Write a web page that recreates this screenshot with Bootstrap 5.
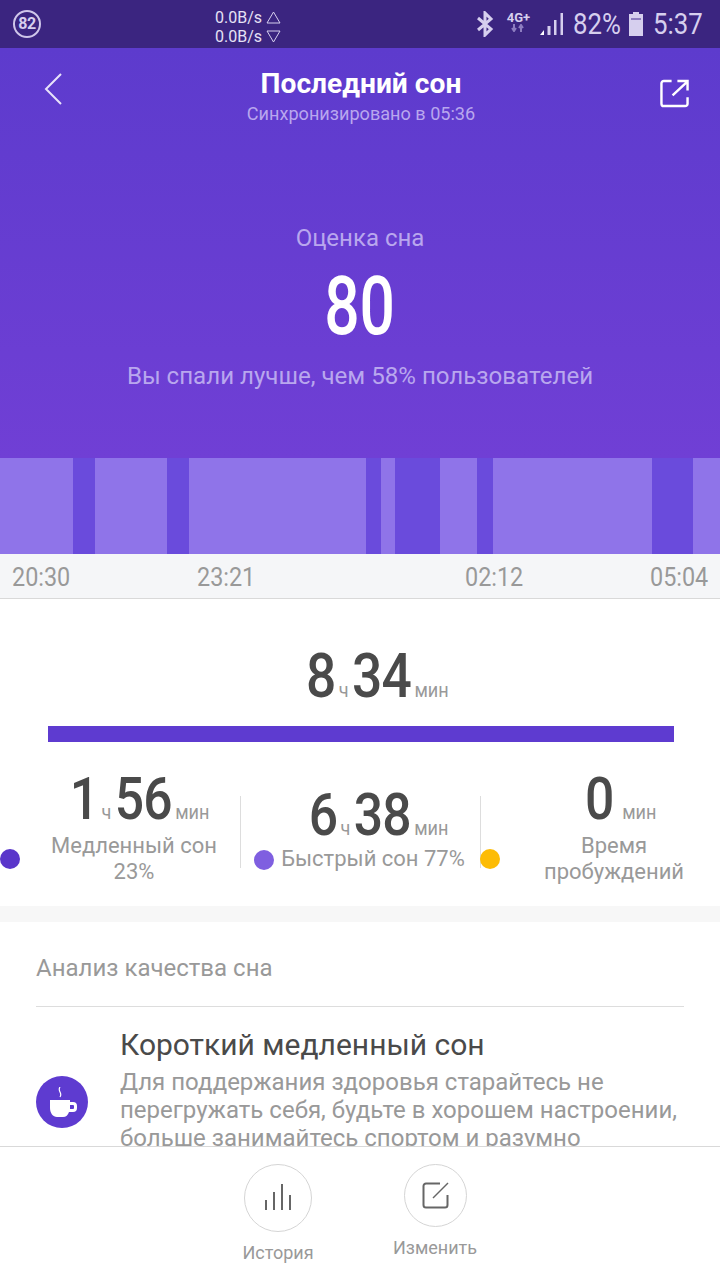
<!DOCTYPE html>
<html lang="ru">
<head>
<meta charset="utf-8">
<title>Последний сон</title>
<link href="https://cdn.jsdelivr.net/npm/bootstrap@5.3.0/dist/css/bootstrap.min.css" rel="stylesheet">
<style>
html,body{margin:0;height:1280px;overflow:hidden;background:#fff}
body{font-family:Roboto,"Noto Sans",sans-serif;color:#4a4a4a}
.screen{width:720px;height:1280px}
.sbar{height:48px;background:#3b2580;color:#d6cfee;padding:0 16px 0 13px}
.ringnum{width:28px;height:28px;border:2px solid #cfc6ea;border-radius:50%;font-size:16px;font-weight:700;line-height:24px;text-align:center;letter-spacing:-.5px}
.netspeed{font-size:16px;line-height:19px;color:#e6e1f5;width:110px;margin-left:174px;padding-top:8px;height:48px}
.netspeed svg{vertical-align:-1px}
.cond{display:inline-block;transform:scaleX(.86)}
.pct{font-size:30px;line-height:48px;transform-origin:center}
.lte{font-size:13px;font-weight:700;line-height:12px;text-align:center;width:28px}
.hero{height:410px;background:linear-gradient(180deg,#5d3bcd 0%,#703fd5 100%);color:#fff}
.topbar{height:85px;padding:0 30px 0 44px}
.htitle{font-size:28.2px;font-weight:700;line-height:30px;padding-top:21px;height:51px}
.hsub{font-size:18.1px;line-height:20px;color:#b9a7ee;margin-top:5px}
.hlabel{font-size:24px;line-height:26px;color:#b9a7ee;margin-top:92px}
.hscore{font-size:82px;line-height:76px;font-weight:500;margin-top:17px}
.hscore .cond{transform:scaleX(.76)}
.hnote{font-size:24.1px;line-height:28px;color:#b9a7ee;margin-top:18px}
.chart{height:96px;background:#8f74e9}
.chart i{display:block;flex:none;height:96px}
.deep{background:#6a4bdc}
.light{background:#8f74e9}
.axis{height:45px;background:#f5f6f8;border-bottom:1px solid #d9d9d9;color:#999;font-size:26px;line-height:46px;padding:0 12px;position:relative}
.axis .cond{transform:scaleX(.9);transform-origin:left center;width:64px;position:absolute;top:0}
.total{height:127px;padding-top:45px;padding-left:38px;line-height:64px}
.bignum{font-size:60px;font-weight:500;color:#4a4a4a;letter-spacing:-1px}
.total .bignum{font-size:62px}
.unit{font-size:21px;color:#999;margin:0 4px}
.bar{height:16px;background:#5e3bd0;margin:0 46px 0 48px}
.stats{height:164px;padding-top:24px}
.stat{position:relative;width:240px;height:128px}
.stat .num{position:absolute;top:0;left:0;right:0;text-align:center;line-height:64px;white-space:nowrap}
.stat-lbl{font-size:22px;line-height:26px;color:#999;text-align:center;position:absolute}
.dot{width:20px;height:20px;border-radius:50%;position:absolute}
.vline{width:1px;height:72px;background:#ddd;position:absolute;top:30px}
.gap{height:16px;background:#f7f7f7}
.analysis{padding:0 36px;overflow:hidden;height:224px}
.atitle{font-size:24px;line-height:26px;color:#999;padding:33px 0 25px;border-bottom:1px solid #ddd}
.aicon{width:52px;height:52px;border-radius:50%;background:#5e3bd0;flex:none;margin-top:69px;padding-left:3px}
.ahead{font-size:30px;line-height:34px;color:#4a4a4a;margin-top:21px}
.atext{font-size:24px;line-height:28px;color:#999;margin-top:6px}
.abody{margin-left:32px;width:580px}
.bottom{height:134px;border-top:1px solid #d9d9d9;background:#fff}
.circ{border:1px solid #d5d5d5;border-radius:50%;background:#fff}
.blabel{font-size:18px;line-height:22px;color:#999;text-align:center}
</style>
</head>
<body>
<div class="screen d-flex flex-column">
  <div class="sbar d-flex align-items-center flex-shrink-0">
    <div class="ringnum flex-shrink-0">82</div>
    <div class="netspeed flex-shrink-0">
      <div>0.0B/s <svg width="15" height="13" viewBox="0 0 15 13"><path d="M7.5 1 14 12H1Z" fill="none" stroke="#d6cfee"/></svg></div>
      <div>0.0B/s <svg width="15" height="13" viewBox="0 0 15 13"><path d="M7.5 12 14 1H1Z" fill="none" stroke="#d6cfee"/></svg></div>
    </div>
    <div class="d-flex align-items-center ms-auto">
      <svg width="18" height="26" viewBox="0 0 18 26"><path d="M2 7 15 18 9 24V2l6 6L2 19" fill="none" stroke="#d6cfee" stroke-width="3"/></svg>
      <div class="lte" style="margin-left:10px;margin-top:-4px">4G+<svg class="d-block mx-auto" width="14" height="8" viewBox="0 0 14 8"><path d="M3 0v5M1 4l2 3 2-3M10 8V3M8 4l2-3 2 3" fill="none" stroke="#8d7dc0" stroke-width="2"/></svg></div>
      <svg style="margin-left:8px" width="24" height="24" viewBox="0 0 24 24"><path d="M0 23 4 18v5Z" fill="#fff"/><rect x="7.500" y="14" width="3" height="9" fill="#d6cfee"/><rect x="14" y="8" width="2.500" height="15" fill="#d6cfee"/><rect x="20.500" y="1" width="2.500" height="22" fill="#d6cfee"/></svg>
      <span class="cond pct" style="margin:0 3px 0 5px">82%</span>
      <svg width="16" height="26" viewBox="0 0 16 26"><path d="M5 1h6v2h4v22H1V3h4Z" fill="#d6cfee"/><rect x="3" y="7" width="10" height="2" fill="#8d7dc0"/></svg>
      <span class="cond pct" style="margin:0 -3px 0 5px">5:37</span>
    </div>
  </div>
  <div class="hero text-center flex-shrink-0">
    <div class="topbar d-flex justify-content-between">
      <svg class="mt-4 flex-shrink-0" width="18" height="34" viewBox="0 0 18 34"><path d="M17 2 2 17l15 15" fill="none" stroke="#e8e2fa" stroke-width="2"/></svg>
      <div>
        <div class="htitle">Последний сон</div>
        <div class="hsub">Синхронизировано в 05:36</div>
      </div>
      <svg class="flex-shrink-0" style="margin-top:31px;margin-right:1px" width="29" height="29" viewBox="0 0 30 30"><path d="M12 2H4a2.500 2.500 0 0 0-2.500 2.500v21A2.500 2.500 0 0 0 4 28h22a2.500 2.500 0 0 0 2.500-2.500V19" fill="none" stroke="#fff" stroke-width="2.500"/><path d="M13 17 28 3M18 2h10.500v10" fill="none" stroke="#fff" stroke-width="2.500"/></svg>
    </div>
    <div class="hlabel">Оценка сна</div>
    <div class="hscore"><span class="cond">80</span></div>
    <div class="hnote">Вы спали лучше, чем 58% пользователей</div>
  </div>
  <div class="chart d-flex flex-shrink-0">
    <i class="light" style="width:73px"></i><i class="deep" style="width:22px"></i><i class="light" style="width:72px"></i><i class="deep" style="width:22px"></i><i class="light" style="width:177px"></i><i class="deep" style="width:15px"></i><i class="light" style="width:14px"></i><i class="deep" style="width:45px"></i><i class="light" style="width:37px"></i><i class="deep" style="width:16px"></i><i class="light" style="width:159px"></i><i class="deep" style="width:41px"></i><i class="light" style="width:27px"></i>
  </div>
  <div class="axis flex-shrink-0">
    <span class="cond" style="left:12px">20:30</span><span class="cond" style="left:197px">23:21</span><span class="cond" style="left:465px">02:12</span><span class="cond" style="left:650px">05:04</span>
  </div>
  <div class="total text-center flex-shrink-0"><span class="cond"><span class="bignum">8</span><span class="unit">ч</span><span class="bignum">34</span><span class="unit">мин</span></span></div>
  <div class="bar flex-shrink-0"></div>
  <div class="stats d-flex flex-shrink-0">
    <div class="stat">
      <div class="num" style="top:1px;padding-left:42px"><span class="cond"><span class="bignum">1</span><span class="unit">ч</span><span class="bignum">56</span><span class="unit">мин</span></span></div>
      <div class="stat-lbl" style="left:46px;width:176px;top:67px">Медленный сон<br>23%</div>
      <div class="dot" style="left:0;background:#5a36ca;top:83px"></div>
      <div class="vline" style="left:240px"></div>
    </div>
    <div class="stat">
      <div class="num" style="top:17px;padding-left:40px"><span class="cond"><span class="bignum">6</span><span class="unit">ч</span><span class="bignum">38</span><span class="unit">мин</span></span></div>
      <div class="stat-lbl" style="left:40px;width:186px;top:80px;white-space:nowrap">Быстрый сон 77%</div>
      <div class="dot" style="left:14px;background:#7f5fe0;top:84px"></div>
      <div class="vline" style="left:240px"></div>
    </div>
    <div class="stat">
      <div class="num" style="top:1px;padding-left:45px"><span class="cond"><span class="bignum">0</span><span class="unit" style="margin-left:10px">мин</span></span></div>
      <div class="stat-lbl" style="left:44px;width:180px;top:67px">Время<br>пробуждений</div>
      <div class="dot" style="left:0;background:#fdbc05;top:83px"></div>
    </div>
  </div>
  <div class="gap flex-shrink-0"></div>
  <div class="analysis flex-shrink-0">
    <div class="atitle">Анализ качества сна</div>
    <div class="d-flex">
      <div class="aicon d-flex align-items-center justify-content-center">
        <svg width="28" height="31" viewBox="0 0 28 31"><path d="M10 0c-3 4 3 6 0 10" fill="none" stroke="#fff" stroke-width="1.200"/><path d="M0 13h20v2h3a4 4 0 0 1 4 4v2a4 4 0 0 1-4 4h-4c-1 3-3 5-6 5H7c-4 0-7-4-7-9Zm20 5v4h3a1 1 0 0 0 1-1v-2a1 1 0 0 0-1-1Z" fill="#fff" fill-rule="evenodd"/></svg>
      </div>
      <div class="abody">
        <div class="ahead">Короткий медленный сон</div>
        <div class="atext">Для поддержания здоровья старайтесь не перегружать себя, будьте в хорошем настроении, больше занимайтесь спортом и разумно</div>
      </div>
    </div>
  </div>
  <div class="bottom d-flex flex-shrink-0">
    <div class="d-flex flex-column align-items-center" style="margin-left:243px;padding-top:17px;width:70px">
      <div class="circ d-flex align-items-center justify-content-center" style="width:68px;height:68px">
        <svg width="28" height="28" viewBox="0 0 28 28"><path d="M2 16v10M10 8v18M18 0v26M26 11v15" stroke="#666" stroke-width="2" fill="none"/></svg>
      </div>
      <div class="blabel text-nowrap" style="margin-top:10px">История</div>
    </div>
    <div class="d-flex flex-column align-items-center" style="margin-left:90px;padding-top:17px;width:64px">
      <div class="circ d-flex align-items-center justify-content-center" style="width:63px;height:63px">
        <svg width="27" height="27" viewBox="0 0 27 27"><path d="M18 1.500H4A2.500 2.500 0 0 0 1.500 4v19A2.500 2.500 0 0 0 4 25.500h19a2.500 2.500 0 0 0 2.500-2.500V13" fill="none" stroke="#666" stroke-width="2"/><path d="M11 16 26 1" fill="none" stroke="#666" stroke-width="1.500"/></svg>
      </div>
      <div class="blabel text-nowrap" style="margin-top:10px">Изменить</div>
    </div>
  </div>
</div>
</body>
</html>
